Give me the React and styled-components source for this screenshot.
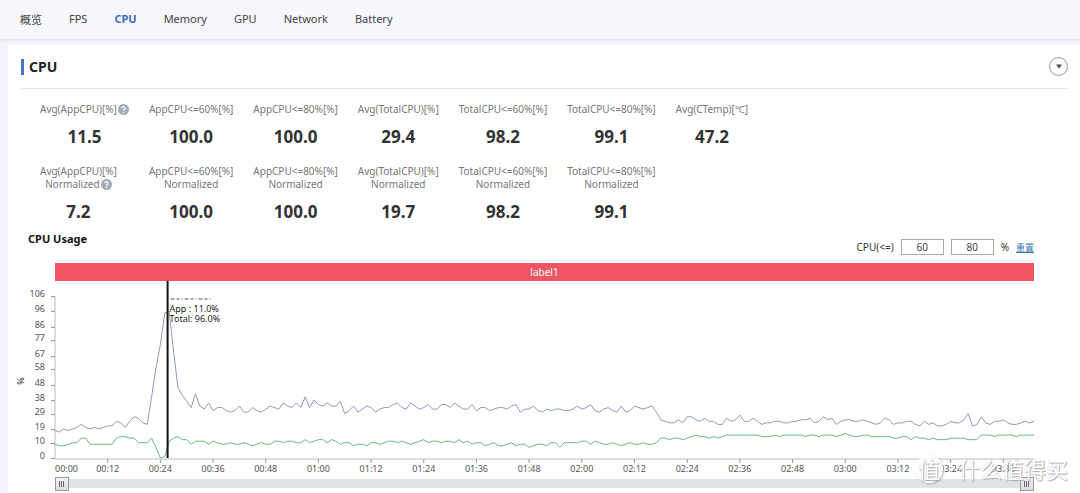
import { useState } from 'react';
import styled, { createGlobalStyle } from 'styled-components';

const TOTAL = [
  18, 17, 19, 18, 19, 20, 22, 20, 19, 20, 19, 20, 21, 21, 24, 23, 20, 24, 27,
  26, 23, 22, 40, 59, 74, 95, 96, 70, 46, 41, 37, 33, 42, 34, 32, 36, 31, 33,
  33, 31, 30, 31, 34, 30, 30, 33, 31, 30, 32, 34, 33, 32, 36, 34, 33, 36, 33,
  40, 33, 38, 35, 34, 36, 34, 34, 37, 29, 31, 34, 30, 32, 34, 33, 30, 32, 33,
  33, 35, 36, 33, 32, 36, 34, 32, 33, 35, 32, 32, 35, 35, 33, 36, 34, 32, 32,
  35, 31, 33, 33, 31, 32, 33, 33, 32, 34, 35, 30, 32, 32, 34, 31, 30, 32, 31,
  32, 32, 31, 31, 32, 34, 32, 33, 35, 31, 30, 32, 33, 31, 30, 34, 30, 31, 34,
  33, 32, 33, 34, 30, 25, 24, 23, 23, 25, 23, 27, 27, 25, 24, 26, 24, 24, 22,
  22, 26, 24, 25, 28, 24, 24, 26, 24, 22, 23, 23, 24, 24, 23, 23, 24, 24, 25,
  25, 26, 23, 24, 27, 25, 26, 22, 24, 25, 25, 24, 24, 25, 24, 23, 22, 23, 26,
  25, 22, 23, 23, 24, 24, 22, 21, 24, 22, 23, 21, 21, 22, 24, 23, 23, 25, 29,
  21, 22, 27, 23, 22, 24, 24, 25, 23, 22, 22, 23, 24, 23, 24,
];

const APP = [
  9, 8, 8, 9, 10, 10, 13, 13, 9, 9, 9, 9, 9, 9, 13, 14, 14, 13, 13, 10, 10, 10,
  13, 7, 0, 1, 11, 13, 14, 12, 12, 9, 11, 11, 11, 9, 11, 10, 9, 9, 10, 9, 9,
  10, 9, 8, 9, 10, 9, 9, 11, 11, 10, 11, 11, 10, 10, 12, 10, 11, 12, 12, 10,
  12, 11, 9, 10, 10, 8, 9, 9, 8, 10, 10, 9, 10, 11, 11, 10, 11, 10, 9, 10, 11,
  12, 10, 11, 11, 10, 11, 11, 10, 12, 10, 11, 9, 10, 10, 8, 9, 10, 8, 8, 9, 10,
  8, 9, 9, 7, 8, 9, 9, 8, 10, 10, 7, 10, 10, 10, 10, 11, 11, 9, 11, 10, 9, 9,
  10, 9, 8, 9, 10, 9, 9, 10, 9, 9, 10, 13, 13, 12, 13, 13, 12, 13, 14, 15, 14,
  14, 13, 14, 13, 14, 15, 15, 15, 15, 15, 15, 15, 15, 14, 14, 14, 15, 14, 15,
  15, 15, 15, 15, 14, 15, 15, 14, 15, 15, 15, 14, 15, 16, 15, 14, 14, 15, 15,
  14, 14, 14, 14, 14, 13, 13, 14, 14, 12, 14, 13, 13, 12, 13, 12, 12, 12, 13,
  13, 13, 13, 12, 12, 12, 15, 15, 15, 14, 15, 15, 15, 15, 14, 15, 15, 15, 15,
];

const DURATION = 223;
const MAX = 106;
const PLOT_HEIGHT = 162;
const Y_TICKS = [106, 96, 86, 77, 67, 58, 48, 38, 29, 19, 10, 0];
const X_TICKS = Array.from({ length: 19 }, (_, i) => i * 12);

const TABS = ['概览', 'FPS', 'CPU', 'Memory', 'GPU', 'Network', 'Battery'];

const STATS = [
  { name: 'Avg(AppCPU)[%]', value: '11.5', normalized: '7.2', help: true },
  { name: 'AppCPU<=60%[%]', value: '100.0', normalized: '100.0' },
  { name: 'AppCPU<=80%[%]', value: '100.0', normalized: '100.0' },
  { name: 'Avg(TotalCPU)[%]', value: '29.4', normalized: '19.7' },
  { name: 'TotalCPU<=60%[%]', value: '98.2', normalized: '98.2' },
  { name: 'TotalCPU<=80%[%]', value: '99.1', normalized: '99.1' },
  { name: 'Avg(CTemp)[℃]', value: '47.2' },
];

const GlobalStyle = createGlobalStyle`
  * {
    box-sizing: border-box;
  }

  body {
    margin: 0;
    background: #f3f4fb;
    color: #333;
    font-family: 'Noto Sans', 'Noto Sans CJK SC', sans-serif;
  }
`;

const StyledNav = styled.nav`
  display: flex;
  align-items: center;
  gap: 27px;
  height: 39px;
  padding: 0 20px 2px;
  background: #f5f7fa;
  box-shadow: 0 1px 3px #dcdff0;
`;

const StyledTab = styled.a`
  color: ${({ $active }) => ($active ? '#3a68c8' : '#444')};
  font-size: 11px;
  font-weight: ${({ $active }) => ($active ? 700 : 400)};
  text-decoration: none;
`;

const StyledCard = styled.main`
  position: relative;
  margin: 6px 0 0 8px;
  padding: 0 12px 5px 13px;
  background: #fff;
`;

const StyledHeader = styled.header`
  display: flex;
  align-items: center;
  justify-content: space-between;
  height: 44px;
  border-bottom: 1px solid #e6e6e6;
`;

const StyledTitle = styled.h1`
  margin: 0;
  padding-left: 5px;
  border-left: 3px solid #4a72c8;
  color: #222;
  font-size: 14px;
  line-height: 16px;
`;

const StyledCollapse = styled.button`
  display: flex;
  align-items: center;
  justify-content: center;
  width: 19px;
  height: 19px;
  padding: 0;
  border: 1px solid #999;
  border-radius: 50%;
  background: #fff;
`;

const StyledStats = styled.table`
  margin: 14px 0 0 9px;
  border-collapse: collapse;

  td {
    padding: 0 10px 16px;
    vertical-align: top;
  }

  tr:last-child td {
    padding-bottom: 7px;
  }
`;

const StyledStat = styled.div`
  width: fit-content;
  text-align: center;
`;

const StyledStatName = styled.div`
  display: flex;
  align-items: center;
  justify-content: center;
  color: #777;
  font-size: 10px;
  line-height: 13px;
  white-space: nowrap;
`;

const StyledStatValue = styled.div`
  margin-top: 9px;
  color: #333;
  font-size: 17px;
  font-weight: 700;
  line-height: 24px;
`;

const StyledHelp = styled.svg`
  margin-left: 1px;
`;

const StyledUsage = styled.section`
  padding: 0 34px 0 7px;
`;

const StyledToolbar = styled.div`
  display: flex;
  justify-content: space-between;
  height: 32px;
`;

const StyledSubtitle = styled.h2`
  margin: 0;
  color: #111;
  font-size: 11px;
  line-height: 15px;
`;

const StyledLimits = styled.form`
  display: flex;
  align-items: center;
  gap: 7px;
  font-size: 10px;
`;

const StyledInput = styled.input`
  width: 43px;
  height: 16px;
  padding: 0;
  border: 1px solid #aaa;
  color: #444;
  font: inherit;
  text-align: center;
`;

const StyledReset = styled.a`
  color: #3a78b0;
  font-size: 9px;
`;

const StyledLabelBar = styled.div`
  margin-left: 27px;
  background: #ed5565;
  color: #fff;
  font-size: 10px;
  line-height: 18px;
  text-align: center;
`;

const StyledChart = styled.svg`
  display: block;
  width: calc(100% - 27px);
  height: 194px;
  margin-left: 27px;
  overflow: visible;
  fill: #555;
  font-size: 9px;
`;

const StyledRange = styled.div`
  display: flex;
  align-items: center;
  justify-content: space-between;
  height: 9px;
  margin: 4px 0 0 27px;
  background: #e0e4e8;
`;

const StyledHandle = styled.button`
  display: flex;
  align-items: center;
  justify-content: center;
  width: 14px;
  height: 14px;
  padding: 0;
  border: 1px solid #999;
  background: linear-gradient(#f4f4f4, #dcdce0);
`;

const StyledWatermark = styled.div`
  position: absolute;
  right: 12px;
  bottom: 10px;
  display: flex;
  align-items: center;
  gap: 15px;
  color: #fff;
  font-size: 22px;
  line-height: 28px;
  text-shadow: 1px 1px 1px #aaa, 0 0 1px #bbb;
`;

const StyledStamp = styled.span`
  width: 28px;
  height: 28px;
  border-radius: 50%;
  background: rgba(255, 255, 255, 0.85);
  box-shadow: 1px 1px 2px #aaa;
  text-align: center;
`;

const HelpIcon = () => (
  <StyledHelp width="11" height="11" viewBox="0 0 12 12" aria-hidden="true">
    <circle cx="6" cy="6" r="6" fill="#a4abb9" />
    <path
      d="M4.2 4.6a1.8 1.7 0 1 1 2.7 1.5Q6 6.5 6 7.3M6 8.5v1.2"
      fill="none"
      stroke="#fff"
      strokeWidth="1.3"
    />
  </StyledHelp>
);

const formatTime = (s) =>
  [Math.floor(s / 60), s % 60].map((n) => String(n).padStart(2, '0')).join(':');

const toY = (value) => PLOT_HEIGHT * (1 - value / MAX);

const toPoints = (values) => values.map((v, i) => `${i},${toY(v)}`).join(' ');

const UsageChart = () => (
  <StyledChart role="img" aria-label="CPU Usage">
    <svg y="15" overflow="visible">
      <path d={`M0 0V${PLOT_HEIGHT}`} stroke="#bbb" />
      <line x1="0" x2="100%" y1="163" y2="163" stroke="#bbb" />
      {Y_TICKS.map((v) => (
        <g key={v}>
          <path d={`M-4 ${Math.round(toY(v))}.5h4`} stroke="#999" />
          <text x="-10" y={Math.round(toY(v)) + 1} textAnchor="end">
            {v}
          </text>
        </g>
      ))}
      {X_TICKS.map((s) => (
        <svg key={s} x={`${(s / DURATION) * 100}%`} overflow="visible">
          {s > 0 && <path d="M0 163v4" stroke="#999" />}
          <text x="0" y="176" textAnchor={s ? 'middle' : 'start'}>
            {formatTime(s)}
          </text>
        </svg>
      ))}
      <text
        x="-31"
        y="85"
        fill="#222"
        textAnchor="middle"
        transform="rotate(-90 -31 85)"
      >
        %
      </text>
      <svg
        width="100%"
        height={PLOT_HEIGHT}
        viewBox={`0 0 ${DURATION} ${PLOT_HEIGHT}`}
        preserveAspectRatio="none"
        fill="none"
      >
        <polyline
          points={toPoints(TOTAL)}
          stroke="#8c9bbe"
          vectorEffect="non-scaling-stroke"
        />
        <polyline
          points={toPoints(APP)}
          stroke="#6cb583"
          vectorEffect="non-scaling-stroke"
        />
      </svg>
    </svg>
    <svg x="11.5%" overflow="visible" fill="#222">
      <path d="M0 0v177" stroke="#111" strokeWidth="2" />
      <path d="M3 18h42" stroke="#555" strokeDasharray="4 2 3 2 1 2" />
      <text x="2" y="31">
        App : 11.0%
      </text>
      <text x="2" y="41">
        Total: 96.0%
      </text>
    </svg>
  </StyledChart>
);

const Handle = ({ label }) => (
  <StyledHandle type="button" aria-label={label}>
    <svg width="6" height="6" stroke="#667">
      <path d="M.5 0v6M2.5 0v6M4.5 0v6" />
    </svg>
  </StyledHandle>
);

const App = () => {
  const [limits, setLimits] = useState({ low: '60', high: '80' });

  const handleChange = (e) => {
    setLimits({ ...limits, [e.target.name]: e.target.value });
  };

  return (
    <>
      <GlobalStyle />
      <StyledNav>
        {TABS.map((tab) => (
          <StyledTab key={tab} href="#" $active={tab === 'CPU'}>
            {tab}
          </StyledTab>
        ))}
      </StyledNav>
      <StyledCard>
        <StyledHeader>
          <StyledTitle>CPU</StyledTitle>
          <StyledCollapse type="button" aria-label="Collapse">
            <svg width="8" height="5" fill="#445">
              <path d="M1 .5h6L4 4.5z" />
            </svg>
          </StyledCollapse>
        </StyledHeader>
        <StyledStats>
          <tbody>
            <tr>
              {STATS.map(({ name, value, help }) => (
                <td key={name}>
                  <StyledStat>
                    <StyledStatName>
                      {name}
                      {help && <HelpIcon />}
                    </StyledStatName>
                    <StyledStatValue>{value}</StyledStatValue>
                  </StyledStat>
                </td>
              ))}
            </tr>
            <tr>
              {STATS.filter((s) => s.normalized).map((s) => (
                <td key={s.name}>
                  <StyledStat>
                    <StyledStatName>{s.name}</StyledStatName>
                    <StyledStatName>
                      Normalized
                      {s.help && <HelpIcon />}
                    </StyledStatName>
                    <StyledStatValue>{s.normalized}</StyledStatValue>
                  </StyledStat>
                </td>
              ))}
            </tr>
          </tbody>
        </StyledStats>
        <StyledUsage>
          <StyledToolbar>
            <StyledSubtitle>CPU Usage</StyledSubtitle>
            <StyledLimits>
              <label htmlFor="low">CPU(&lt;=)</label>
              <StyledInput
                id="low"
                name="low"
                value={limits.low}
                onChange={handleChange}
              />
              <StyledInput
                name="high"
                aria-label="CPU upper limit"
                value={limits.high}
                onChange={handleChange}
              />
              <span>%</span>
              <StyledReset href="#">重置</StyledReset>
            </StyledLimits>
          </StyledToolbar>
          <StyledLabelBar>label1</StyledLabelBar>
          <UsageChart />
          <StyledRange>
            <Handle label="Range start" />
            <Handle label="Range end" />
          </StyledRange>
        </StyledUsage>
        <StyledWatermark>
          <StyledStamp>值</StyledStamp>
          什么值得买
        </StyledWatermark>
      </StyledCard>
    </>
  );
};

export default App;
